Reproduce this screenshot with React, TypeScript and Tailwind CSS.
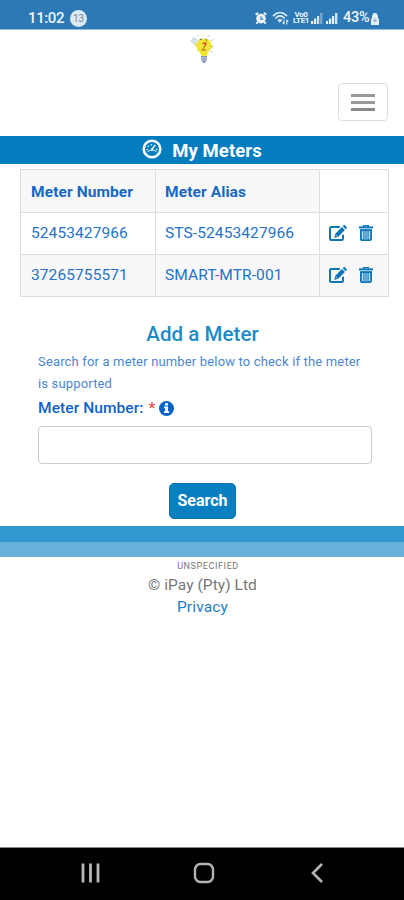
const meters = [
  { number: "52453427966", alias: "STS-52453427966" },
  { number: "37265755571", alias: "SMART-MTR-001" },
];

const AlarmIcon = () => (
  <svg className="w-3 h-3" viewBox="0 0 12 12" fill="none">
    <circle cx="6" cy="6.6" r="4.8" fill="#eef5fb" />
    <path d="M.7 2.8 3.2.8M11.3 2.8 8.8.8M2.8 10 1.2 11.6M9.2 10l1.6 1.6" stroke="#eef5fb" strokeWidth="1.9" />
    <path d="M6 4.2v2.9h2.2" stroke="#2c79b5" strokeWidth="1.1" />
  </svg>
);

const WifiIcon = () => (
  <svg className="w-[17px] h-[14px]" viewBox="0 0 16 14" fill="none" stroke="#dceaf6" strokeLinecap="round">
    <path d="M1 4.6c4-4 9-4 13 0" strokeWidth="1.8" />
    <path d="M3.3 7c2.7-2.6 5.7-2.6 8.4 0" strokeWidth="1.7" />
    <path d="M5.6 9.2c1.3-1.2 2.5-1.2 3.8 0L7.5 11Z" fill="#dceaf6" strokeWidth="1" />
    <path d="M11.5 9v4m-1.3-1.3 1.3 1.3M14.3 13V9m1.2 1.3L14.3 9" strokeWidth="1.1" />
  </svg>
);

const SignalIcon = ({ strong }: { strong?: boolean }) => (
  <svg className="w-3 h-[11px]" viewBox="0 0 12 11" fill="#e4eff8">
    <rect x="0" y="8" width="2.2" height="3" />
    <rect x="3" y="5.5" width="2.2" height="5.5" />
    <rect x="6" y="3" width="2.2" height="8" opacity={strong ? 1 : 0.9} />
    <rect x="9" y="0" width="2.4" height="11" opacity={strong ? 0.9 : 0.4} />
  </svg>
);

const BatteryIcon = () => (
  <svg className="w-2 h-3" viewBox="0 0 8 12">
    <path d="M2.2 0h3.6v1.5C7.2 2 7 4 7 5l1 1.5V12H0V6.5L1 5c0-1-.2-3 1.2-3.5Z" fill="#e4eff8" />
    <path d="M2 7.5h4M4 5.5v4" stroke="#7baed6" />
  </svg>
);

const BulbLogo = () => (
  <svg className="w-[27px] h-[31px]" viewBox="0 0 27 31" fill="none">
    <path d="M9.5 2.5 8.8 1M14 1.6V.4M19 3l1.2-1.8M22 7l2.5-1.5M23 12l2 .4M21.5 17l2 1" stroke="#a6c5b5" strokeWidth=".9" />
    <path d="M5.5 9.5 8.3 12l1.2 5" stroke="#e6d84c" strokeWidth="1.8" />
    <path d="M3 4.2 5 6l.3-3L7 6l1.5-1-.8 3.6-2.5 1L3 8.4 1.5 7l2-.3Z" fill="#d9e8ed" stroke="#a9c7d5" strokeWidth=".5" />
    <path d="M8.5 7.5C10 4 19 3.2 21.2 7c2.4 4 .4 9.2-2.4 12l-1 3.5h-5.3l-1.4-4C8.1 16 7 11 8.5 7.5Z" fill="#f1e632" />
    <path d="M10.5 5.8 13 5m3.5.3 1.7 1.3" stroke="#5c7045" strokeWidth="1" />
    <path d="M13.2 9.6c2-1 4.2-.5 3.4 1.3l-3.4 5.3h4" stroke="#c08429" strokeWidth="1.2" />
    <path d="m14.5 9.3 2.4-.3-.8 2.7" stroke="#dd3b2f" strokeWidth="1.2" />
    <path d="M20.3 15c2-.5 2.8-2 1.9-4" stroke="#d5cc39" strokeWidth="1.3" />
    <path d="M12 22h6l-.5 5-2.4 2.5-2.5-2.5Z" fill="#8496b5" />
    <path d="M12.3 23.7h5.4M12.6 25.9h4.8" stroke="#cdd6e4" strokeWidth=".8" />
  </svg>
);

const DashboardIcon = () => (
  <svg className="w-5 h-5" viewBox="0 0 20 20" fill="none" stroke="white">
    <circle cx="10" cy="10" r="8.3" strokeWidth="2.5" />
    <path d="M5.3 10.5h.1M6.3 7.3h.1M9.4 5.8h.1M14.6 10.5h.1" strokeWidth="1.6" strokeLinecap="round" />
    <path d="m10.3 10 3-4.2" strokeWidth="1.3" />
    <path d="M5.4 13c1.2-1.4 2.8-1.7 4.6-1.7s3.4.3 4.6 1.7" strokeWidth="1" />
    <circle cx="10.2" cy="9.9" r="1.1" fill="white" stroke="none" />
  </svg>
);

const EditIcon = () => (
  <svg className="w-[18px] h-4" viewBox="0 0 18 16" fill="none">
    <path d="M10.8 2H2.2C1.4 2 1 2.4 1 3.2v10.6c0 .8.4 1.2 1.2 1.2h10.6c.8 0 1.2-.4 1.2-1.2V9.8" stroke="#0b76b7" strokeWidth="2" />
    <path d="m12.9 2.1 3 3-6.6 6.6-4.1 1.2 1.1-4.2ZM13.7 1.3l.8-.8c.6-.6 1.1-.5 1.6 0L17.5 2c.5.5.5 1 0 1.5l-.8.8Z" fill="#0b76b7" />
    <path d="m6.7 10 1.5 1.5" stroke="white" strokeWidth=".8" />
  </svg>
);

const TrashIcon = () => (
  <svg className="w-[14px] h-4" viewBox="0 0 14 16" fill="none" stroke="#0b76b7">
    <path d="M0 2.4h14" strokeWidth="2" />
    <path d="M4.5 2V.7h5V2" strokeWidth="1.2" />
    <path d="M1.9 5.2h10.2V14c0 .7-.4 1.1-1.1 1.1H3c-.7 0-1.1-.4-1.1-1.1Z" fill="#c3dcec" strokeWidth="1.8" />
    <path d="M1 5.3h12" strokeWidth="1.5" />
    <path d="M4.9 6v8M7 6v8M9.1 6v8" strokeWidth="1.1" />
  </svg>
);

const InfoIcon = () => (
  <svg className="w-[15px] h-[15px]" viewBox="0 0 15 15">
    <circle cx="7.5" cy="7.5" r="7.5" fill="#0a63c4" />
    <path d="M6 2.2h3v2.2H6ZM5.1 5.5H9v4.7h1.1V12H5v-1.8h1.2v-3H5.1Z" fill="white" />
  </svg>
);

const App = () => {
  return (
    <div className="w-full h-[900px] flex flex-col bg-white font-[Roboto,sans-serif] text-[#2473c9]">
      {/* status bar */}
      <div className="h-[30px] shrink-0 flex items-center bg-[#2c79b5] border-b border-[#91bbdc] pl-[28px] pr-[25px] pt-[7px] text-[#eef5fb]">
        <span className="w-[42px] text-[15px] leading-none font-medium tracking-[-0.4px] whitespace-nowrap">11:02</span>
        <span className="w-[17px] h-[17px] rounded-full bg-[#dceaf6] text-[#7b858e] text-[10px] leading-[17px] text-center">13</span>
        <div className="ml-auto flex items-center">
          <AlarmIcon />
          <span className="ml-[5px] flex"><WifiIcon /></span>
          <span className="ml-[4px] w-[16px] text-[8px] leading-[6px] font-bold text-center tracking-tighter">Vo0 LTE1</span>
          <span className="ml-[2px] flex"><SignalIcon /></span>
          <span className="ml-[3px] flex"><SignalIcon strong /></span>
          <span className="ml-[5px] mt-px w-[28px] text-[14.5px] leading-none font-medium tracking-[-0.2px] whitespace-nowrap">43%</span>
          <span className="mt-[2px] flex"><BatteryIcon /></span>
        </div>
      </div>

      {/* logo and menu */}
      <div className="h-[106px] shrink-0 flex flex-col">
        <div className="h-[53px] flex justify-center pt-[4px]">
          <BulbLogo />
        </div>
        <button className="self-end mr-4 w-[50px] h-[38px] rounded-[4px] border border-[#dedede] flex flex-col items-center justify-center gap-[4px]">
          <span className="w-6 h-[3px] bg-[#999999]"></span>
          <span className="w-6 h-[3px] bg-[#999999]"></span>
          <span className="w-6 h-[3px] bg-[#888888]"></span>
        </button>
      </div>

      <div className="h-7 shrink-0 flex items-center justify-center gap-[10px] bg-[#047dbf] text-white">
        <span className="-mt-[3px]"><DashboardIcon /></span>
        <h1 className="text-[18.5px] leading-none font-bold tracking-[0.1px] pt-[2px]">My Meters</h1>
      </div>

      {/* meters table */}
      <div className="ml-5 mr-[15px] mt-[5px] shrink-0 border border-[#dddddd] text-[15.5px]">
        <div className="grid grid-cols-[135px_164px_1fr] h-[42px] items-stretch font-bold tracking-[0.1px] text-[#1768c4]">
          <div className="flex items-center pt-[3px] pl-[10px] bg-[#f8f8f8] border-r border-[#dddddd]">Meter Number</div>
          <div className="flex items-center pt-[3px] pl-[9px] bg-[#f8f8f8] border-r border-[#dddddd]">Meter Alias</div>
          <div></div>
        </div>
        {meters.map((meter) => (
          <div key={meter.number} className="grid grid-cols-[135px_164px_1fr] h-[42px] items-stretch border-t border-[#dddddd] tracking-[0.1px] even:bg-white odd:bg-[#f8f8f8]">
            <div className="flex items-center pt-px pl-[10px] border-r border-[#dddddd]">{meter.number}</div>
            <div className="flex items-center pt-px pl-[9px] border-r border-[#dddddd]">{meter.alias}</div>
            <div className="flex items-center pl-[9px] pb-px gap-[12px]">
              <EditIcon />
              <TrashIcon />
            </div>
          </div>
        ))}
      </div>

      {/* add a meter form */}
      <div className="h-[229px] shrink-0 flex flex-col pl-[38px] pr-[37px] pt-[25px]">
        <h2 className="text-center text-[20.5px] leading-[24px] font-medium tracking-[0.05px] text-[#1c8bc7]">Add a Meter</h2>
        <p className="mt-[5px] text-[13px] leading-[22px] tracking-[0.16px] text-[#4a87d0] whitespace-nowrap">
          Search for a meter number below to check if the meter
          <br />
          is supported
        </p>
        <label className="mt-[3px] h-[22px] flex items-center text-[15.5px] font-medium tracking-[0.08px] text-[#0f63c7]">
          Meter Number:
          <span className="ml-[5px] mr-[4px] text-[#f04b4b]">*</span>
          <span className="-mt-[2px]"><InfoIcon /></span>
        </label>
        <input type="text" className="mt-[6px] w-[334px] h-[38px] shrink-0 rounded-[4px] border border-[#cccccc] bg-white" />
        <button className="mt-[19px] self-center w-[67px] h-9 shrink-0 rounded-[5px] bg-[#087fc1] border border-[#0874b3] text-white text-[16px] font-bold">Search</button>
      </div>

      <div className="h-4 shrink-0 bg-[#3098cf]"></div>
      <div className="h-[15px] shrink-0 bg-[#65b1da]"></div>

      <footer className="flex flex-col items-center text-[#777777]">
        <span className="mt-[4px] ml-3 text-[9px] leading-[11px] tracking-[0.6px]">UNSPECIFIED</span>
        <span className="mt-[2px] ml-px text-[15.5px] leading-[22px] tracking-[0.05px]">© iPay (Pty) Ltd</span>
        <a href="#" className="ml-px text-[15.5px] leading-[23px] tracking-[0.15px] text-[#1b7fbf]">Privacy</a>
      </footer>

      {/* android navigation */}
      <div className="mt-auto h-[53px] shrink-0 bg-black border-t border-[#888888] flex items-center pb-[3px]">
        <svg className="ml-[81px] w-5 h-5" viewBox="0 0 20 20" stroke="#b5b5b5" strokeWidth="2.8">
          <path d="M2 .5v19M9.5.5v19M17 .5v19" />
        </svg>
        <svg className="ml-[92px] w-[22px] h-[22px]" viewBox="0 0 22 22" fill="none" stroke="#b5b5b5" strokeWidth="2.4">
          <rect x="2" y="2" width="18" height="18" rx="5.5" />
        </svg>
        <svg className="ml-[96px] w-3 h-5" viewBox="0 0 12 20" fill="none" stroke="#b5b5b5" strokeWidth="2.6">
          <path d="m11 1-9 9 9 9" />
        </svg>
      </div>
    </div>
  );
};

export default App;
